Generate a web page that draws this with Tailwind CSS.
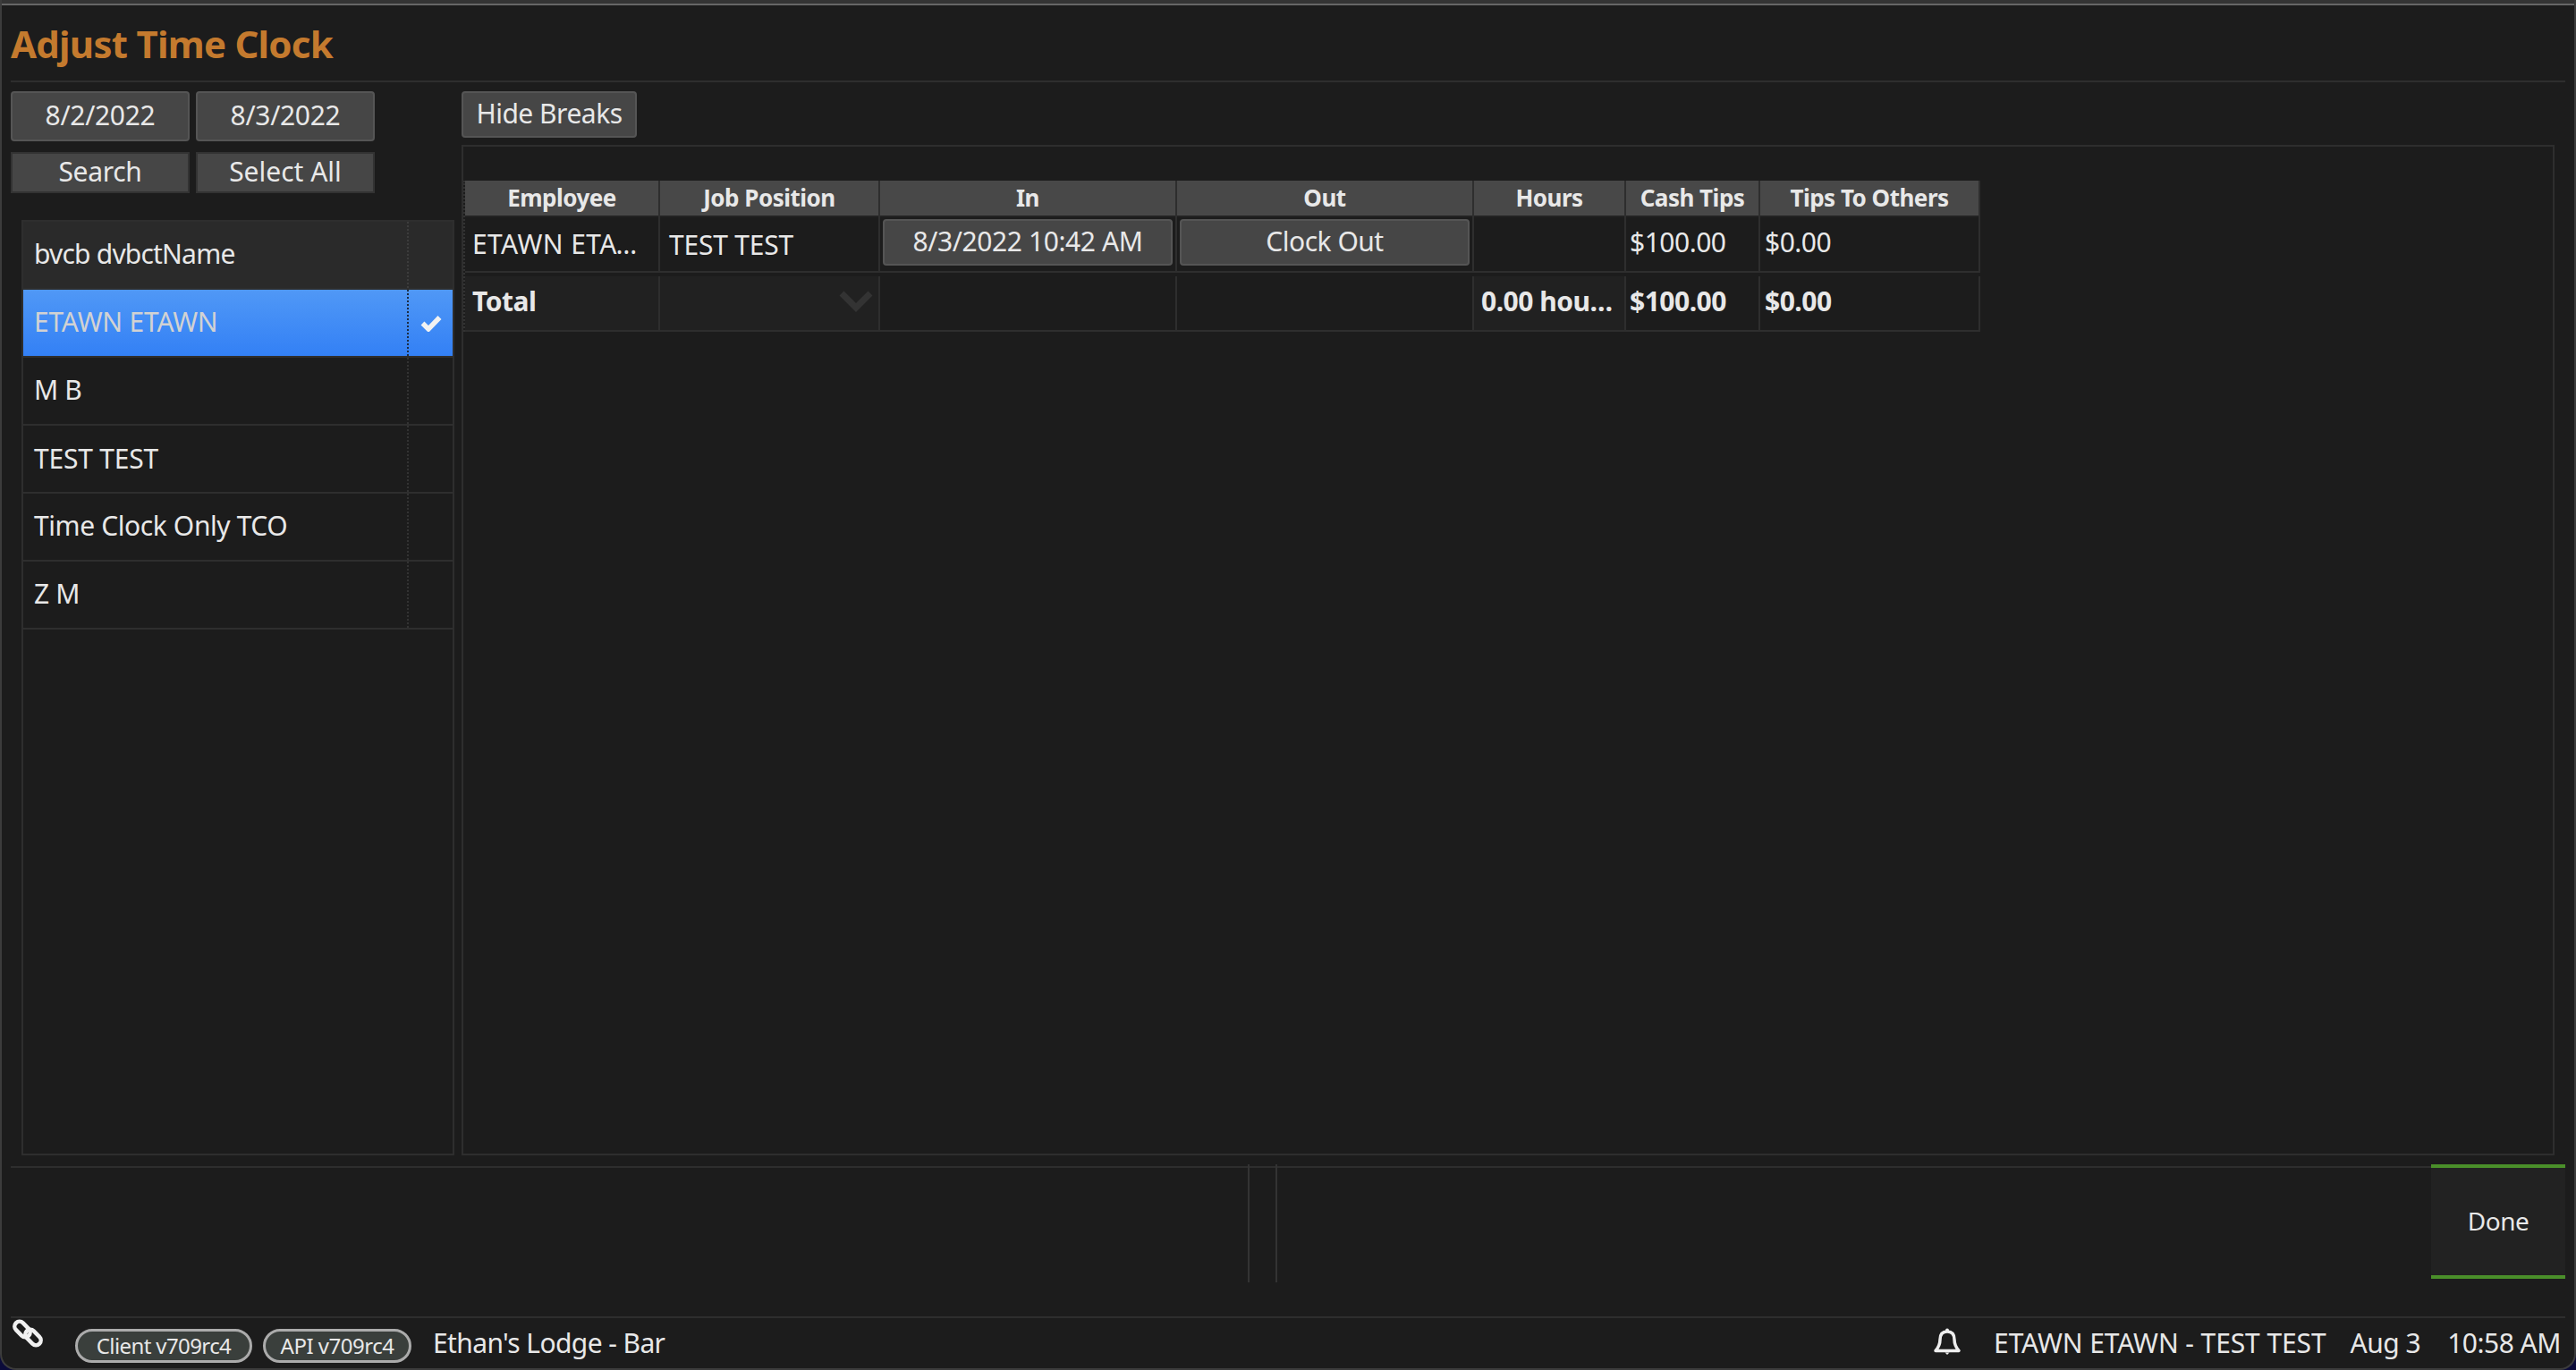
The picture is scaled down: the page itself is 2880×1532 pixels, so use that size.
<!DOCTYPE html>
<html><head><meta charset="utf-8"><script src="https://cdn.jsdelivr.net/npm/@tailwindcss/browser@4"></script></head>
<body class="bg-[#0b0b3a] m-0">
<div class="w-[2880px] h-[1532px] overflow-hidden bg-[#1c1c1c] rounded-b-[18px] border-l-2 border-r-2 border-b-2 border-[#3c3c3c] flex flex-col font-['Noto_Sans',sans-serif] text-[#e8e8e8]">
  <div class="h-[6px] shrink-0 bg-[#343434] border-b-2 border-[#666]"></div>
  <div class="h-[86px] shrink-0 mx-[10px] border-b-2 border-[#2e2e2e] flex items-center text-[42px] font-bold text-[#c47a2e] tracking-[-0.75px]">Adjust Time Clock</div>
  <div class="h-[1210px] shrink-0 flex pt-[10px] pl-[10px]">
    <div class="w-[496px] shrink-0 flex flex-col">
      <div class="grid grid-cols-[200px_200px] gap-x-[7px] gap-y-[12px] text-[30px] tracking-[-0.3px]">
        <div class="h-[56px] pb-[3px] rounded-[4px] border-2 border-[#555] bg-[#464646] flex items-center justify-center">8/2/2022</div>
        <div class="h-[56px] pb-[3px] rounded-[4px] border-2 border-[#555] bg-[#464646] flex items-center justify-center">8/3/2022</div>
        <div class="h-[46px] pb-[3px] border-2 border-[#333] bg-[#464646] flex items-center justify-center">Search</div>
        <div class="h-[46px] pb-[3px] border-2 border-[#333] bg-[#464646] flex items-center justify-center tracking-[0px]">Select All</div>
      </div>
      <div class="ml-[12px] mt-[30px] w-[484px] h-[1046px] border-2 border-[#2e2e2e] flex flex-col text-[30px] tracking-[-0.4px]">
        <div class="h-[76px] shrink-0 flex bg-[#2a2a2a] border-b-2 border-[#2e2e2e]"><div class="w-[431px] flex items-center pl-[12px] pb-[3px] border-r-2 border-dotted border-[#3c3c3c] tracking-[-0.8px]">bvcb dvbctName</div><div class="flex-1"></div></div>
        <div class="h-[76px] shrink-0 flex bg-gradient-to-b from-[#5098f6] to-[#3380f5] border-b-2 border-[#2e2e2e]"><div class="w-[431px] flex items-center pl-[12px] pb-[3px] text-[#d2d2d2] border-r-2 border-dotted border-[#1c2c44] tracking-[-0.2px]">ETAWN ETAWN</div><div class="flex-1 flex items-center justify-center"><svg width="24" height="20" viewBox="0 0 24 20"><path d="M2.500 10.500L9 17L21.500 4" fill="none" stroke="#f2f2f2" stroke-width="5.500"/></svg></div></div>
        <div class="h-[76px] shrink-0 flex border-b-2 border-[#2e2e2e]"><div class="w-[431px] flex items-center pl-[12px] pb-[3px] border-r-2 border-dotted border-[#333]">M B</div></div>
        <div class="h-[76px] shrink-0 flex border-b-2 border-[#2e2e2e]"><div class="w-[431px] flex items-center pl-[12px] pb-[1px] border-r-2 border-dotted border-[#333] tracking-[-0.2px]">TEST TEST</div></div>
        <div class="h-[76px] shrink-0 flex border-b-2 border-[#2e2e2e]"><div class="w-[431px] flex items-center pl-[12px] pb-[3px] border-r-2 border-dotted border-[#333]">Time Clock Only TCO</div></div>
        <div class="h-[76px] shrink-0 flex border-b-2 border-[#2e2e2e]"><div class="w-[431px] flex items-center pl-[12px] pb-[3px] border-r-2 border-dotted border-[#333]">Z M</div></div>
      </div>
    </div>
    <div class="flex-1 flex flex-col ml-[8px]">
      <div class="w-[196px] h-[52px] pb-[3px] rounded-[4px] border-2 border-[#555] bg-[#464646] flex items-center justify-center text-[30px] tracking-[-0.5px]">Hide Breaks</div>
      <div class="mt-[8px] w-[2340px] h-[1130px] border-2 border-[#2e2e2e] pt-[38px]">
        <div class="w-[1696px] border-l-2 border-dotted border-[#333]">
          <div class="h-[41px] grid grid-cols-[218px_246px_332px_332px_170px_150px_246px] bg-[#484848] border-b-2 border-[#222] text-[26px] font-bold tracking-[-0.5px]">
            <div class="border-r-2 pb-[4px] border-[#2e2e2e] flex items-center justify-center">Employee</div>
            <div class="border-r-2 pb-[4px] border-[#2e2e2e] flex items-center justify-center">Job Position</div>
            <div class="border-r-2 pb-[4px] border-[#2e2e2e] flex items-center justify-center">In</div>
            <div class="border-r-2 pb-[4px] border-[#2e2e2e] flex items-center justify-center">Out</div>
            <div class="border-r-2 pb-[4px] border-[#2e2e2e] flex items-center justify-center">Hours</div>
            <div class="border-r-2 pb-[4px] border-[#2e2e2e] flex items-center justify-center">Cash Tips</div>
            <div class="border-r-2 pb-[4px] border-[#2e2e2e] flex items-center justify-center">Tips To Others</div>
          </div>
          <div class="h-[62px] grid grid-cols-[218px_246px_332px_332px_170px_150px_246px] border-b-2 border-[#2e2e2e] text-[30px] tracking-[-0.5px]">
            <div class="border-r-2 border-[#2e2e2e] flex items-center pl-[8px] pb-[2px]"><span class="block w-[190px] truncate tracking-[0.4px]">ETAWN ETAWN</span></div>
            <div class="border-r-2 border-[#2e2e2e] flex items-center pl-[10px] tracking-[-0.2px]">TEST TEST</div>
            <div class="border-r-2 border-[#2e2e2e] flex px-[3px] pt-[2px] pb-[6px]"><div class="flex-1 pb-[3px] rounded-[4px] border-2 border-[#555] bg-[#464646] flex items-center justify-center tracking-[-0.4px]">8/3/2022 10:42 AM</div></div>
            <div class="border-r-2 border-[#2e2e2e] flex px-[3px] pt-[2px] pb-[6px]"><div class="flex-1 pb-[3px] rounded-[4px] border-2 border-[#555] bg-[#464646] flex items-center justify-center">Clock Out</div></div>
            <div class="border-r-2 border-[#2e2e2e]"></div>
            <div class="border-r-2 border-[#2e2e2e] flex items-center pl-[4px] pb-[5px]">$100.00</div>
            <div class="border-r-2 border-[#2e2e2e] flex items-center pl-[5px] pb-[5px]">$0.00</div>
          </div>
          <div class="h-[62px] mt-[4px] grid grid-cols-[218px_246px_332px_332px_170px_150px_246px] border-b-2 border-[#2e2e2e] text-[30px] font-bold tracking-[-0.5px]">
            <div class="border-r-2 border-[#2e2e2e] bg-[#212121] flex items-center pl-[8px] pb-[5px]">Total</div>
            <div class="border-r-2 border-[#2e2e2e] bg-[#212121] flex items-center justify-end pr-[6px] pb-[4px]"><svg width="38" height="24" viewBox="0 0 38 24"><path d="M3 3L19 19L35 3" fill="none" stroke="#333" stroke-width="7"/></svg></div>
            <div class="border-r-2 border-[#2e2e2e]"></div>
            <div class="border-r-2 border-[#2e2e2e]"></div>
            <div class="border-r-2 border-[#2e2e2e] bg-[#212121] flex items-center pl-[8px] pb-[5px]"><span class="block w-[148px] truncate">0.00 hours</span></div>
            <div class="border-r-2 border-[#2e2e2e] flex items-center pl-[4px] pb-[5px]">$100.00</div>
            <div class="border-r-2 border-[#2e2e2e] flex items-center pl-[5px] pb-[5px]">$0.00</div>
          </div>
        </div>
      </div>
    </div>
  </div>
  <div class="h-[172px] shrink-0 mx-[10px] border-b-2 border-[#2e2e2e] flex items-start">
    <div class="flex-1 h-[132px] border-t-2 mt-[2px] border-[#2e2e2e] flex">
      <div class="ml-[1383px] w-[2px] h-[132px] -mt-[4px] bg-[#333]"></div>
      <div class="ml-[29px] w-[2px] h-[132px] -mt-[4px] bg-[#333]"></div>
    </div>
    <div class="w-[150px] h-[128px] pb-[3px] bg-[#222] border-y-4 border-[#4a8f2a] flex items-center justify-center text-[28px] tracking-[-0.5px]">Done</div>
  </div>
  <div class="flex-1 mx-[10px] flex items-center text-[30px] tracking-[-0.5px]">
    <svg class="mb-[24px] ml-[2px]" width="34" height="34" viewBox="0 0 34 34"><g fill="none" stroke="#f0f0f0" stroke-width="4.500"><rect x="1" y="7" width="20" height="11" rx="5.500" transform="rotate(45 11 12.500)"/><rect x="13" y="16" width="20" height="11" rx="5.500" transform="rotate(45 23 21.500)"/></g></svg>
    <div class="ml-[36px] mt-[4px] w-[198px] h-[38px] pb-[1px] rounded-full border-[3px] border-[#ababab] bg-[#3a3f3c] flex items-center justify-center text-[24px] tracking-[-0.6px]">Client v709rc4</div>
    <div class="ml-[12px] mt-[4px] w-[166px] h-[38px] pb-[1px] rounded-full border-[3px] border-[#ababab] bg-[#3a3f3c] flex items-center justify-center text-[24px]">API v709rc4</div>
    <div class="ml-[24px] pb-[4px] tracking-[-0.6px]">Ethan's Lodge - Bar</div>
    <div class="ml-auto flex items-center pb-[4px]">
      <svg class="mb-[2px]" width="32" height="30" viewBox="0 0 32 30"><path d="M3 25.500C6 22 8 19 8 13C8 7 11 4 16 4C21 4 24 7 24 13C24 19 26 22 29 25.500Z" fill="none" stroke="#eee" stroke-width="3.500" stroke-linejoin="round"/><circle cx="16" cy="2.500" r="2" fill="#eee"/><path d="M13.500 27.500H18.500L16 30Z" fill="#eee"/></svg>
      <div class="ml-[36px] tracking-[-0.1px]">ETAWN ETAWN - TEST TEST</div>
      <div class="ml-[27px]">Aug 3</div>
      <div class="ml-[30px] mr-[5px]">10:58 AM</div>
    </div>
  </div>
</div>
</body></html>
